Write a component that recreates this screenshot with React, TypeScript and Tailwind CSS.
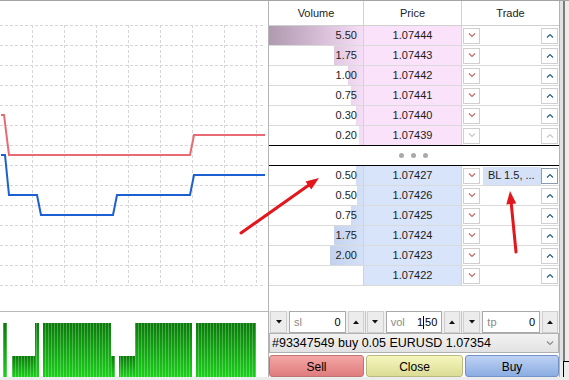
import React from 'react';

type Level = {
	vol: string;
	price: string;
	bar: number;
	order?: string;
	muted?: boolean;
};

const asks: Level[] = [
	{ vol: '5.50', price: '1.07444', bar: 94 },
	{ vol: '1.75', price: '1.07443', bar: 29 },
	{ vol: '1.00', price: '1.07442', bar: 15 },
	{ vol: '0.75', price: '1.07441', bar: 12 },
	{ vol: '0.30', price: '1.07440', bar: 7 },
	{ vol: '0.20', price: '1.07439', bar: 4, muted: true },
];

const bids: Level[] = [
	{ vol: '0.50', price: '1.07427', bar: 7, order: 'BL 1.5, ...' },
	{ vol: '0.50', price: '1.07426', bar: 6 },
	{ vol: '0.75', price: '1.07425', bar: 12 },
	{ vol: '1.75', price: '1.07424', bar: 29 },
	{ vol: '2.00', price: '1.07423', bar: 33 },
	{ vol: '', price: '1.07422', bar: 0 },
];

const gridXs = [32, 64, 96, 128, 160, 192, 224, 256];
const gridYs = Array.from({ length: 14 }, (_, i) => 25 + i * 20);

const volBars = [
	{ x: 3, w: 4, top: 323 },
	{ x: 12, w: 23, top: 356 },
	{ x: 35, w: 4, top: 323 },
	{ x: 43, w: 68, top: 323 },
	{ x: 111, w: 4, top: 356 },
	{ x: 119, w: 16, top: 356 },
	{ x: 135, w: 57, top: 323 },
	{ x: 196, w: 60, top: 323 },
];

const Chev = ({ up, color }: { up?: boolean; color: string }) => (
	<svg width="8" height="5" viewBox="0 0 8 5">
		<polyline
			points={up ? '1,4.5 4,1.5 7,4.5' : '1,0.5 4,3.5 7,0.5'}
			fill="none"
			stroke={color}
			strokeWidth="1.2"
		/>
	</svg>
);

const Tri = ({ up }: { up?: boolean }) => (
	<svg width="6" height="4" viewBox="0 0 6 4">
		<polygon points={up ? '0,4 3,0.5 6,4' : '0,0 6,0 3,3.5'} fill="#111" />
	</svg>
);

// red annotation arrow: line with a filled head at (x2, y2)
const Arrow = ({ x1, y1, x2, y2 }: { x1: number; y1: number; x2: number; y2: number }) => {
	const dx = x2 - x1;
	const dy = y2 - y1;
	const len = Math.hypot(dx, dy);
	const ux = dx / len;
	const uy = dy / len;
	const hl = 13;
	const hw = 5;
	const bx = x2 - ux * hl;
	const by = y2 - uy * hl;
	const pts = `${x2},${y2} ${bx - uy * hw},${by + ux * hw} ${bx + uy * hw},${by - ux * hw}`;
	return (
		<g>
			<line x1={x1} y1={y1} x2={bx + ux * 2} y2={by + uy * 2} stroke="#e3161c" strokeWidth="3" strokeLinecap="round" />
			<polygon points={pts} fill="#e3161c" />
		</g>
	);
};

const BookRow = ({ row, side, last }: { row: Level; side: 'ask' | 'bid'; last?: boolean }) => {
	const isAsk = side === 'ask';
	return (
		<div
			className={`grid grid-cols-[95px_98px_97px] h-[20px] border-b ${
				last ? 'border-black' : 'border-[#dadada]'
			}`}
		>
			<div className="relative border-r border-[#d2d2d2] flex items-center justify-end pr-[6px]">
				{row.bar > 0 && (
					<div
						className={`absolute inset-y-0 right-0 bg-[length:94px_100%] bg-right bg-linear-to-r ${
							isAsk ? 'from-[#b09ab0] to-[#f6def7]' : 'from-[#a4b4d8] to-[#d5e1f8]'
						}`}
						style={{ width: row.bar }}
					/>
				)}
				<span className="relative">{row.vol}</span>
			</div>
			<div
				className={`border-r border-[#d2d2d2] flex items-center justify-center ${
					isAsk ? 'bg-[#fae2fb]' : 'bg-[#d8e4fa]'
				}`}
			>
				{row.price}
			</div>
			<div className="flex items-center pl-[1px] pr-[1px]">
				<div className="w-[17px] h-[16px] border border-[#cfcfcf] bg-white flex items-center justify-center">
					<Chev color={row.muted ? '#c8c8c8' : '#c26a6a'} />
				</div>
				<div className="flex-1 h-[18px] ml-[3px]">
					{row.order && (
						<div className="h-full bg-[#d5e1f7] flex items-center pl-[5px] whitespace-nowrap">
							{row.order}
						</div>
					)}
				</div>
				<div
					className={`w-[17px] h-[16px] border bg-white flex items-center justify-center ${
						row.order ? 'border-[#8a9ab0]' : 'border-[#cfcfcf]'
					}`}
				>
					<Chev up color={row.muted ? '#c8c8c8' : '#2b5c7c'} />
				</div>
			</div>
		</div>
	);
};

const Spin = ({ label, value, last }: { label: string; value: React.ReactNode; last?: boolean }) => (
	<div className={`flex h-full items-stretch gap-[2px] px-[1px] ${last ? '' : 'border-r border-[#c4c4c4]'} w-[97px]`}>
		<div className="w-[17px] border border-[#cfcfcf] bg-[#ececec] flex items-center justify-center">
			<Tri />
		</div>
		<div className="flex-1 border border-[#a9a9a9] bg-white flex items-center justify-between px-[4px]">
			<span className="text-[#8a8a8a]">{label}</span>
			<span className="text-black">{value}</span>
		</div>
		<div className="w-[16px] border border-[#cfcfcf] bg-[#ececec] flex items-center justify-center">
			<Tri up />
		</div>
	</div>
);

export default function App() {
	return (
		<div className="w-[569px] h-[380px] bg-white overflow-hidden relative flex flex-col font-['Liberation_Sans',Arial,sans-serif] text-[11px] text-[#1c1c1c]">
			<div className="h-[1px] bg-[#a4a4a4]" />
			<div className="flex h-[376px]">
				{/* chart + volume subwindow */}
				<div className="w-[268px] flex flex-col">
					<svg width="268" height="310" viewBox="0 1 268 310">
						{gridYs.map((y) => (
							<line key={'h' + y} x1="0" x2="263" y1={y + 0.5} y2={y + 0.5} stroke="#d6d6d6" strokeDasharray="3 2" />
						))}
						{gridXs.map((x) => (
							<line key={'v' + x} x1={x + 0.5} x2={x + 0.5} y1="25" y2="286" stroke="#d6d6d6" strokeDasharray="3 2" />
						))}
						<path d="M1 115 H4 L9 155 H190 L194 135 H265" fill="none" stroke="#e86a72" strokeWidth="2" />
						<path d="M1 155 H5 L9 195 H37 L41 215 H113 L117 195 H190 L194 175 H265" fill="none" stroke="#1b5fd2" strokeWidth="2" />
					</svg>
					<div className="h-[1px] bg-[#b8b8b8]" />
					<svg width="268" height="65" viewBox="0 312 268 65">
						<defs>
							<linearGradient id="vg" x1="0" y1="0" x2="0" y2="1">
								<stop offset="0" stopColor="#0a7a0a" />
								<stop offset="1" stopColor="#1ccf1c" />
							</linearGradient>
							<pattern id="st" width="3" height="10" patternUnits="userSpaceOnUse">
								<rect width="1" height="10" fill="#ffffff" opacity="0.25" />
							</pattern>
						</defs>
						{volBars.map((b) => (
							<g key={b.x}>
								<rect x={b.x} y={b.top} width={b.w} height={377 - b.top} fill="url(#vg)" />
								<rect x={b.x} y={b.top} width={b.w} height={377 - b.top} fill="url(#st)" />
							</g>
						))}
					</svg>
				</div>

				{/* depth of market */}
				<div className="w-[292px] border-l border-r border-[#b4b4b4] flex flex-col">
					<div className="grid grid-cols-[95px_98px_97px] h-[25px] border-b border-[#d0d0d0] text-[#222]">
						<div className="border-r border-[#d2d2d2] flex items-center justify-center">Volume</div>
						<div className="border-r border-[#d2d2d2] flex items-center justify-center">Price</div>
						<div className="flex items-center justify-center">Trade</div>
					</div>
					{asks.map((r, i) => (
						<BookRow key={r.price} row={r} side="ask" last={i === asks.length - 1} />
					))}
					<div className="h-[20px] border-b border-black grid grid-cols-[95px_98px_97px]">
						<div />
						<div className="flex items-center justify-center gap-[7px]">
							<span className="w-[5px] h-[5px] rounded-full bg-[#a9a9a9]" />
							<span className="w-[5px] h-[5px] rounded-full bg-[#a9a9a9]" />
							<span className="w-[5px] h-[5px] rounded-full bg-[#a9a9a9]" />
						</div>
						<div />
					</div>
					{bids.map((r) => (
						<BookRow key={r.price} row={r} side="bid" />
					))}
					<div className="flex-1" />

					<div className="h-[22px] flex bg-[#f0f0f0]">
						<Spin label="sl" value="0" />
						<Spin
							label="vol"
							value={
								<span className="flex items-center">
									1<span className="inline-block w-[1px] h-[13px] bg-black -mr-[2px]" />.50
								</span>
							}
						/>
						<Spin label="tp" value="0" last />
					</div>
					<div className="h-[20px] border border-[#b0b0b0] bg-linear-to-b from-[#f2f2f2] to-[#e2e2e2] flex items-center justify-between pl-[2px] pr-[4px] text-black text-[12.5px]">
						<span>#93347549 buy 0.05 EURUSD 1.07354</span>
						<Chev color="#8a8a8a" />
					</div>
					<div className="h-[2px]" />
					<div className="h-[22px] grid grid-cols-[95px_97px_1fr] gap-[2px] text-black text-[12px]">
						<div className="rounded-[3px] border border-[#bf7474] bg-linear-to-b from-[#f4a6a6] to-[#df7c7c] flex items-center justify-center pt-[1px]">
							Sell
						</div>
						<div className="rounded-[3px] border border-[#b9b982] bg-linear-to-b from-[#f6f6bd] to-[#dcdc96] flex items-center justify-center pt-[1px]">
							Close
						</div>
						<div className="rounded-[3px] border border-[#7393c6] bg-linear-to-b from-[#bed2f3] to-[#8badE2] flex items-center justify-center pt-[1px]">
							Buy
						</div>
					</div>
				</div>

				{/* window edge */}
				<div className="w-[9px] flex flex-col bg-[#ececec]">
					<div className="flex-1 flex">
						<div className="w-[3px] bg-[#e2e2e2]" />
						<div className="w-[2px] bg-[#7c7c7c]" />
					</div>
					<div className="h-[16px] ml-[3px] border-l border-t border-black" />
				</div>
			</div>
			<div className="flex-1 bg-[#ececec]" />

			<svg className="absolute inset-0 pointer-events-none" width="569" height="380">
				<Arrow x1={241} y1={233} x2={319} y2={178} />
				<Arrow x1={516} y1={252} x2={510} y2={191} />
			</svg>
		</div>
	);
}
